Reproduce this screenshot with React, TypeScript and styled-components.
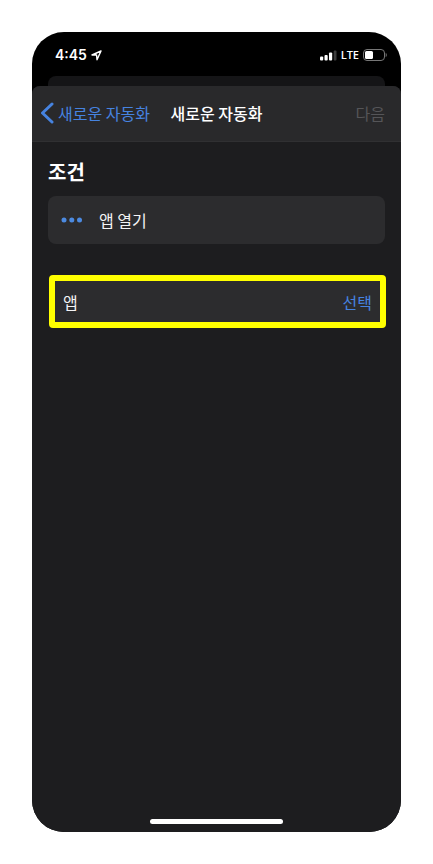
import React from "react";
import styled, { createGlobalStyle } from "styled-components";

const GlobalStyle = createGlobalStyle`
  *, *::before, *::after { box-sizing: border-box; }
  body {
    margin: 0;
    background: #ffffff;
    font-family: "Noto Sans CJK KR", sans-serif;
    color: #f4f4f5;
  }
  button { font: inherit; border: 0; background: none; padding: 0; cursor: pointer; }
  h1, h2 { margin: 0; }
`;

const Page = styled.div`
  display: flex;
  min-height: 100vh;
  padding: 32px;
`;

const Phone = styled.div`
  flex: 1;
  min-width: 0;
  display: flex;
  flex-direction: column;
  overflow: hidden;
  border-radius: 32px;
  background: #000000;
`;

const StatusBar = styled.div`
  display: flex;
  align-items: center;
  justify-content: space-between;
  height: 44px;
  padding: 2px 14px 0 23px;
`;

const StatusGroup = styled.div<{ $gap: number }>`
  display: flex;
  align-items: center;
  gap: ${({ $gap }) => $gap}px;
`;

const Clock = styled.time`
  font-family: Inter, sans-serif;
  font-size: 14px;
  line-height: 20px;
  font-weight: 600;
  color: #ffffff;
`;

const Network = styled.span`
  font-family: "Open Sans", sans-serif;
  font-size: 11px;
  line-height: 20px;
  font-weight: 600;
  color: #ffffff;
`;

const PreviousSheet = styled.div`
  height: 10px;
  margin: 0 16px;
  border-radius: 8px 8px 0 0;
  background: #151517;
`;

const Sheet = styled.main`
  flex: 1;
  display: flex;
  flex-direction: column;
  border-radius: 8px 8px 0 0;
  overflow: hidden;
  background: #1d1d1f;
`;

const NavBar = styled.header`
  display: grid;
  grid-template-columns: 1fr auto 1fr;
  align-items: center;
  height: 56px;
  padding: 0 16px 2px;
  border-bottom: 1px solid #303032;
  background: #29292b;
  font-size: 16px;
  line-height: 24px;
`;

const BackButton = styled.button`
  justify-self: start;
  display: flex;
  align-items: center;
  gap: 4px;
  margin-left: -8px;
  color: #4683e0;
  white-space: nowrap;
`;

const NavTitle = styled.h1`
  font-size: 16px;
  line-height: 24px;
  font-weight: 500;
  color: #ffffff;
  white-space: nowrap;
`;

const NextButton = styled.button`
  justify-self: end;
  &:disabled { color: #555558; cursor: default; }
`;

const Content = styled.section`
  flex: 1;
  padding: 14px 16px;
`;

const Heading = styled.h2`
  font-size: 20px;
  line-height: 32px;
  font-weight: 700;
  color: #ffffff;
`;

const TriggerCard = styled.div`
  display: flex;
  align-items: center;
  gap: 16px;
  height: 48px;
  margin-top: 8px;
  padding: 0 13px;
  border-radius: 8px;
  background: #2c2c2e;
  font-size: 16px;
  line-height: 24px;
`;

const AppRow = styled.div`
  display: flex;
  align-items: center;
  justify-content: space-between;
  height: 53px;
  margin: 31px -1px 0 1px;
  padding: 0 8px;
  border: 6px solid #ffff00;
  border-radius: 4px;
  background: #2c2c2e;
  font-size: 16px;
  line-height: 24px;
`;

const SelectButton = styled.button`
  color: #4683e0;
`;

const HomeArea = styled.footer`
  display: flex;
  justify-content: center;
  padding-bottom: 8px;
`;

const HomeIndicator = styled.div`
  width: 36%;
  height: 5px;
  border-radius: 3px;
  background: #ffffff;
`;

const LocationIcon = () => (
  <svg width="11" height="11" viewBox="0 0 11 11" fill="none" aria-hidden="true">
    <path d="M10 1 1 5h4.600L6 9.800Z" stroke="#fff" strokeWidth="1.4" strokeLinejoin="round" />
  </svg>
);

const SignalIcon = () => (
  <svg width="17" height="11" viewBox="0 0 17 11" aria-label="신호">
    <rect x="0" y="6.500" width="3.200" height="4" rx="1" fill="#fff" />
    <rect x="4.500" y="5" width="3.200" height="5.500" rx="1" fill="#fff" />
    <rect x="9" y="2.500" width="3.200" height="8" rx="1" fill="#fff" />
    <rect x="13.700" y="0.500" width="2.800" height="10" rx="1" fill="#3c3c3c" />
  </svg>
);

const BatteryIcon = () => (
  <svg width="24" height="12" viewBox="0 0 24 12" aria-label="배터리">
    <rect x="0.500" y="0.500" width="21" height="11" rx="3.500" fill="none" stroke="#777" />
    <rect x="2" y="2" width="8" height="8" rx="1.500" fill="#fff" />
    <path d="M22.700 4v4c1.400-.6 1.400-3.400 0-4Z" fill="#777" />
  </svg>
);

const ChevronIcon = () => (
  <svg width="14" height="22" viewBox="0 0 14 22" fill="none" aria-hidden="true">
    <path d="M12 2 2.500 11l9.500 9" stroke="#4683e0" strokeWidth="3" strokeLinecap="round" strokeLinejoin="round" />
  </svg>
);

const DotsIcon = () => (
  <svg width="22" height="6" viewBox="0 0 22 6" fill="#4c8ae0" aria-hidden="true">
    <circle cx="3" cy="3" r="2.500" />
    <circle cx="10.800" cy="3" r="2.500" />
    <circle cx="18.500" cy="3" r="2.500" />
  </svg>
);

export default function App() {
  return (
    <>
      <GlobalStyle />
      <Page>
        <Phone>
          <StatusBar>
            <StatusGroup $gap={4}>
              <Clock>4:45</Clock>
              <LocationIcon />
            </StatusGroup>
            <StatusGroup $gap={4}>
              <SignalIcon />
              <Network>LTE</Network>
              <BatteryIcon />
            </StatusGroup>
          </StatusBar>
          <PreviousSheet />
          <Sheet>
            <NavBar>
              <BackButton type="button">
                <ChevronIcon />
                새로운 자동화
              </BackButton>
              <NavTitle>새로운 자동화</NavTitle>
              <NextButton type="button" disabled>다음</NextButton>
            </NavBar>
            <Content>
              <Heading>조건</Heading>
              <TriggerCard>
                <DotsIcon />
                <span>앱 열기</span>
              </TriggerCard>
              <AppRow>
                <span id="app-label">앱</span>
                <SelectButton type="button" id="app-select" aria-labelledby="app-label app-select">
                  선택
                </SelectButton>
              </AppRow>
            </Content>
            <HomeArea>
              <HomeIndicator />
            </HomeArea>
          </Sheet>
        </Phone>
      </Page>
    </>
  );
}
